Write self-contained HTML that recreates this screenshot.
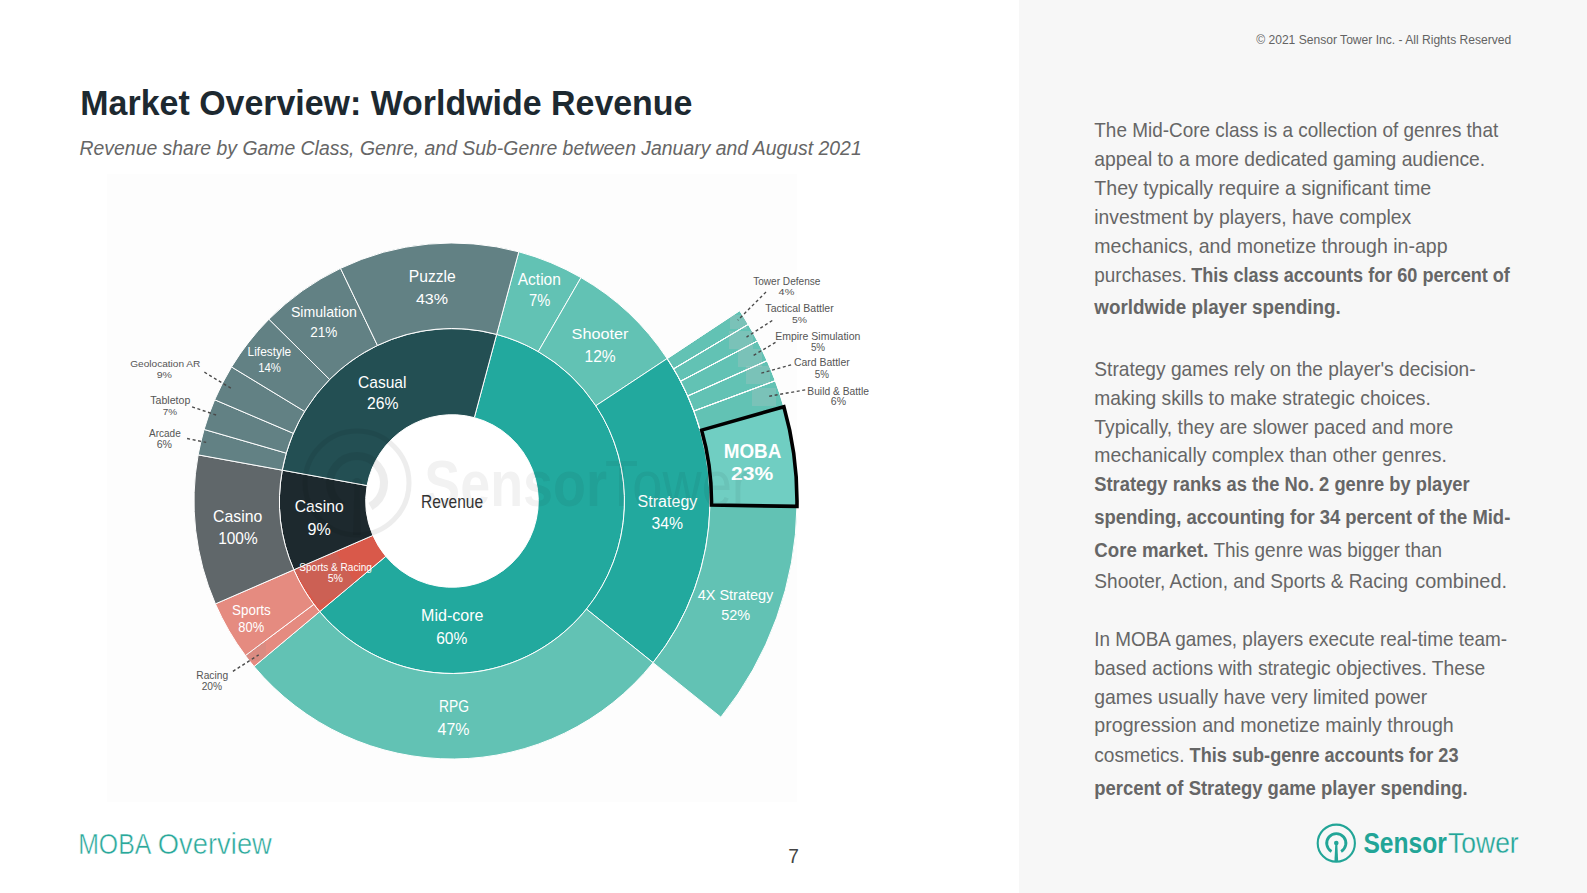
<!DOCTYPE html>
<html><head><meta charset="utf-8"><title>Market Overview: Worldwide Revenue</title>
<style>html,body{margin:0;padding:0;background:#fff;}body{width:1587px;height:893px;overflow:hidden;font-family:"Liberation Sans",sans-serif;}svg{display:block}</style>
</head><body>
<svg width="1587" height="893" viewBox="0 0 1587 893">
<rect x="0" y="0" width="1587" height="893" fill="#ffffff"/>
<rect x="107" y="174" width="690" height="628" fill="#fdfdfd"/>
<g stroke="#ffffff" stroke-width="1.0" stroke-linejoin="round">
<path d="M496.65,334.38 A172.5,172.5 0 1 1 319.66,611.65 L385.79,556.36 A86.3,86.3 0 1 0 474.34,417.64 Z" fill="#22a99e"/>
<path d="M319.66,611.65 A172.5,172.5 0 0 1 293.81,569.78 L372.86,535.41 A86.3,86.3 0 0 0 385.79,556.36 Z" fill="#d9594a"/>
<path d="M293.81,569.78 A172.5,172.5 0 0 1 282.28,470.16 L367.09,485.57 A86.3,86.3 0 0 0 372.86,535.41 Z" fill="#1d292e"/>
<path d="M282.28,470.16 A172.5,172.5 0 0 1 496.65,334.38 L474.34,417.64 A86.3,86.3 0 0 0 367.09,485.57 Z" fill="#234f53"/>
<path d="M518.78,251.79 A258.0,258.0 0 0 1 581.00,277.57 L538.25,351.61 A172.5,172.5 0 0 0 496.65,334.38 Z" fill="#62c2b4"/>
<path d="M581.00,277.57 A258.0,258.0 0 0 1 667.14,358.60 L595.85,405.79 A172.5,172.5 0 0 0 538.25,351.61 Z" fill="#62c2b4"/>
<path d="M667.14,358.60 A258.0,258.0 0 0 1 653.07,662.66 L586.44,609.09 A172.5,172.5 0 0 0 595.85,405.79 Z" fill="#22a99e"/>
<path d="M653.07,662.66 A258.0,258.0 0 0 1 254.07,666.49 L319.66,611.65 A172.5,172.5 0 0 0 586.44,609.09 Z" fill="#62c2b4"/>
<path d="M254.07,666.49 A258.0,258.0 0 0 1 245.41,655.55 L313.87,604.33 A172.5,172.5 0 0 0 319.66,611.65 Z" fill="#e58b80"/>
<path d="M245.41,655.55 A258.0,258.0 0 0 1 215.40,603.88 L293.81,569.78 A172.5,172.5 0 0 0 313.87,604.33 Z" fill="#e58b80"/>
<path d="M215.40,603.88 A258.0,258.0 0 0 1 198.16,454.87 L282.28,470.16 A172.5,172.5 0 0 0 293.81,569.78 Z" fill="#60676a"/>
<path d="M198.16,454.87 A258.0,258.0 0 0 1 204.12,429.45 L286.27,453.16 A172.5,172.5 0 0 0 282.28,470.16 Z" fill="#628184"/>
<path d="M204.12,429.45 A258.0,258.0 0 0 1 214.69,399.78 L293.33,433.32 A172.5,172.5 0 0 0 286.27,453.16 Z" fill="#628184"/>
<path d="M214.69,399.78 A258.0,258.0 0 0 1 231.55,366.96 L304.61,411.38 A172.5,172.5 0 0 0 293.33,433.32 Z" fill="#628184"/>
<path d="M231.55,366.96 A258.0,258.0 0 0 1 268.93,319.20 L329.60,379.45 A172.5,172.5 0 0 0 304.61,411.38 Z" fill="#628184"/>
<path d="M268.93,319.20 A258.0,258.0 0 0 1 340.52,268.33 L377.47,345.43 A172.5,172.5 0 0 0 329.60,379.45 Z" fill="#628184"/>
<path d="M340.52,268.33 A258.0,258.0 0 0 1 518.78,251.79 L496.65,334.38 A172.5,172.5 0 0 0 377.47,345.43 Z" fill="#628184"/>
<path d="M739.69,310.58 A345.0,345.0 0 0 1 748.34,324.35 L673.61,368.89 A258.0,258.0 0 0 0 667.14,358.60 Z" fill="#62c2b4"/>
<path d="M748.34,324.35 A345.0,345.0 0 0 1 757.60,340.90 L680.54,381.27 A258.0,258.0 0 0 0 673.61,368.89 Z" fill="#62c2b4"/>
<path d="M757.60,340.90 A345.0,345.0 0 0 1 767.17,360.68 L687.69,396.06 A258.0,258.0 0 0 0 680.54,381.27 Z" fill="#62c2b4"/>
<path d="M767.17,360.68 A345.0,345.0 0 0 1 775.36,380.74 L693.82,411.07 A258.0,258.0 0 0 0 687.69,396.06 Z" fill="#62c2b4"/>
<path d="M775.36,380.74 A345.0,345.0 0 0 1 783.80,406.48 L700.13,430.32 A258.0,258.0 0 0 0 693.82,411.07 Z" fill="#62c2b4"/>
<path d="M796.97,505.82 A345.0,345.0 0 0 1 720.87,717.18 L653.07,662.66 A258.0,258.0 0 0 0 709.97,504.60 Z" fill="#62c2b4"/>
</g>
<circle cx="452.0" cy="501.0" r="85.8" fill="#ffffff"/>
<clipPath id="srclip"><path d="M319.66,611.65 A172.5,172.5 0 0 1 293.81,569.78 L372.86,535.41 A86.3,86.3 0 0 0 385.79,556.36 Z"/></clipPath>
<polygon clip-path="url(#srclip)" points="336,552 356,584 318,606 294,570" fill="#8a8a8a" fill-opacity="0.16"/>
<clipPath id="rcclip"><path d="M254.07,666.49 A258.0,258.0 0 0 1 245.41,655.55 L313.87,604.33 A172.5,172.5 0 0 0 319.66,611.65 Z"/></clipPath>
<rect clip-path="url(#rcclip)" x="246" y="643" width="20" height="18" fill="#8a8a8a" fill-opacity="0.12"/>
<clipPath id="subclip"><path d="M739.69,310.58 A345.0,345.0 0 0 1 783.30,404.75 L699.76,429.02 A258.0,258.0 0 0 0 667.14,358.60 Z"/></clipPath>
<g fill="#c4c4c4" fill-opacity="0.25" clip-path="url(#subclip)">
<rect x="730" y="315" width="17" height="14"/>
<rect x="729" y="331" width="24" height="18"/>
<rect x="738" y="349" width="24" height="18"/>
<rect x="746" y="366" width="24" height="18"/>
<rect x="752" y="388" width="24" height="18"/>
</g>
<g stroke="#ffffff" stroke-width="1.0" fill="none">
<path d="M739.69,310.58 A345.0,345.0 0 0 1 748.34,324.35 L673.61,368.89 A258.0,258.0 0 0 0 667.14,358.60 Z"/>
<path d="M748.34,324.35 A345.0,345.0 0 0 1 757.60,340.90 L680.54,381.27 A258.0,258.0 0 0 0 673.61,368.89 Z"/>
<path d="M757.60,340.90 A345.0,345.0 0 0 1 767.17,360.68 L687.69,396.06 A258.0,258.0 0 0 0 680.54,381.27 Z"/>
<path d="M767.17,360.68 A345.0,345.0 0 0 1 775.36,380.74 L693.82,411.07 A258.0,258.0 0 0 0 687.69,396.06 Z"/>
<path d="M775.36,380.74 A345.0,345.0 0 0 1 783.80,406.48 L700.13,430.32 A258.0,258.0 0 0 0 693.82,411.07 Z"/>
</g>
<path d="M783.47,405.33 A345.0,345.0 0 0 1 796.97,505.82 L709.97,504.60 A258.0,258.0 0 0 0 699.88,429.45 Z" fill="#70cec2"/>
<path d="M783.88,406.77 A345.0,345.0 0 0 1 796.96,506.42 L711.47,505.08 A259.5,259.5 0 0 0 701.63,430.13 Z" fill="#70cec2" stroke="#000" stroke-width="3.6" stroke-linejoin="miter"/>
<text x="408.72" y="281.90" font-family="Liberation Sans" font-size="16.13" font-weight="normal" font-style="normal" fill="#fff" textLength="47.07" lengthAdjust="spacingAndGlyphs">Puzzle</text>
<text x="415.94" y="303.70" font-family="Liberation Sans" font-size="15.41" font-weight="normal" font-style="normal" fill="#fff" textLength="32.12" lengthAdjust="spacingAndGlyphs">43%</text>
<text x="290.95" y="317.20" font-family="Liberation Sans" font-size="14.97" font-weight="normal" font-style="normal" fill="#fff" textLength="65.90" lengthAdjust="spacingAndGlyphs">Simulation</text>
<text x="310.27" y="336.50" font-family="Liberation Sans" font-size="14.24" font-weight="normal" font-style="normal" fill="#fff" textLength="27.15" lengthAdjust="spacingAndGlyphs">21%</text>
<text x="247.61" y="355.90" font-family="Liberation Sans" font-size="13.08" font-weight="normal" font-style="normal" fill="#fff" textLength="43.58" lengthAdjust="spacingAndGlyphs">Lifestyle</text>
<text x="258.23" y="371.80" font-family="Liberation Sans" font-size="12.21" font-weight="normal" font-style="normal" fill="#fff" textLength="22.73" lengthAdjust="spacingAndGlyphs">14%</text>
<text x="357.99" y="387.60" font-family="Liberation Sans" font-size="17.01" font-weight="normal" font-style="normal" fill="#fff" textLength="48.52" lengthAdjust="spacingAndGlyphs">Casual</text>
<text x="367.02" y="409.40" font-family="Liberation Sans" font-size="16.13" font-weight="normal" font-style="normal" fill="#fff" textLength="31.47" lengthAdjust="spacingAndGlyphs">26%</text>
<text x="517.72" y="285.30" font-family="Liberation Sans" font-size="16.13" font-weight="normal" font-style="normal" fill="#fff" textLength="43.17" lengthAdjust="spacingAndGlyphs">Action</text>
<text x="529.12" y="306.20" font-family="Liberation Sans" font-size="16.13" font-weight="normal" font-style="normal" fill="#fff" textLength="21.27" lengthAdjust="spacingAndGlyphs">7%</text>
<text x="571.64" y="338.80" font-family="Liberation Sans" font-size="15.26" font-weight="normal" font-style="normal" fill="#fff" textLength="56.92" lengthAdjust="spacingAndGlyphs">Shooter</text>
<text x="584.52" y="361.60" font-family="Liberation Sans" font-size="16.13" font-weight="normal" font-style="normal" fill="#fff" textLength="31.17" lengthAdjust="spacingAndGlyphs">12%</text>
<text x="637.62" y="506.90" font-family="Liberation Sans" font-size="15.84" font-weight="normal" font-style="normal" fill="#fff" textLength="59.75" lengthAdjust="spacingAndGlyphs">Strategy</text>
<text x="651.41" y="529.00" font-family="Liberation Sans" font-size="16.28" font-weight="normal" font-style="normal" fill="#fff" textLength="31.58" lengthAdjust="spacingAndGlyphs">34%</text>
<text x="697.66" y="600.10" font-family="Liberation Sans" font-size="14.68" font-weight="normal" font-style="normal" fill="#fff" textLength="75.68" lengthAdjust="spacingAndGlyphs">4X Strategy</text>
<text x="721.16" y="620.30" font-family="Liberation Sans" font-size="14.68" font-weight="normal" font-style="normal" fill="#fff" textLength="28.98" lengthAdjust="spacingAndGlyphs">52%</text>
<text x="213.12" y="521.80" font-family="Liberation Sans" font-size="15.99" font-weight="normal" font-style="normal" fill="#fff" textLength="49.16" lengthAdjust="spacingAndGlyphs">Casino</text>
<text x="218.19" y="544.30" font-family="Liberation Sans" font-size="17.15" font-weight="normal" font-style="normal" fill="#fff" textLength="39.43" lengthAdjust="spacingAndGlyphs">100%</text>
<text x="294.79" y="512.10" font-family="Liberation Sans" font-size="17.01" font-weight="normal" font-style="normal" fill="#fff" textLength="48.82" lengthAdjust="spacingAndGlyphs">Casino</text>
<text x="307.59" y="534.80" font-family="Liberation Sans" font-size="17.01" font-weight="normal" font-style="normal" fill="#fff" textLength="23.22" lengthAdjust="spacingAndGlyphs">9%</text>
<text x="299.27" y="571.30" font-family="Liberation Sans" font-size="11.05" font-weight="normal" font-style="normal" fill="#fff" textLength="72.56" lengthAdjust="spacingAndGlyphs">Sports &amp; Racing</text>
<text x="327.69" y="582.10" font-family="Liberation Sans" font-size="10.17" font-weight="normal" font-style="normal" fill="#fff" textLength="15.31" lengthAdjust="spacingAndGlyphs">5%</text>
<text x="232.05" y="614.80" font-family="Liberation Sans" font-size="15.12" font-weight="normal" font-style="normal" fill="#fff" textLength="38.71" lengthAdjust="spacingAndGlyphs">Sports</text>
<text x="238.37" y="632.20" font-family="Liberation Sans" font-size="14.39" font-weight="normal" font-style="normal" fill="#fff" textLength="25.76" lengthAdjust="spacingAndGlyphs">80%</text>
<text x="421.13" y="620.80" font-family="Liberation Sans" font-size="15.70" font-weight="normal" font-style="normal" fill="#fff" textLength="62.34" lengthAdjust="spacingAndGlyphs">Mid-core</text>
<text x="436.23" y="643.50" font-family="Liberation Sans" font-size="15.70" font-weight="normal" font-style="normal" fill="#fff" textLength="31.14" lengthAdjust="spacingAndGlyphs">60%</text>
<text x="439.11" y="711.70" font-family="Liberation Sans" font-size="16.42" font-weight="normal" font-style="normal" fill="#fff" textLength="29.99" lengthAdjust="spacingAndGlyphs">RPG</text>
<text x="437.59" y="734.50" font-family="Liberation Sans" font-size="17.15" font-weight="normal" font-style="normal" fill="#fff" textLength="31.93" lengthAdjust="spacingAndGlyphs">47%</text>
<text x="723.72" y="457.50" font-family="Liberation Sans" font-size="19.48" font-weight="bold" font-style="normal" fill="#fff" textLength="57.57" lengthAdjust="spacingAndGlyphs">MOBA</text>
<text x="731.14" y="479.70" font-family="Liberation Sans" font-size="18.60" font-weight="bold" font-style="normal" fill="#fff" textLength="42.12" lengthAdjust="spacingAndGlyphs">23%</text>
<text x="421.06" y="508.00" font-family="Liberation Sans" font-size="17.88" font-weight="normal" font-style="normal" fill="#333" textLength="62.07" lengthAdjust="spacingAndGlyphs">Revenue</text>
<text x="130.21" y="366.60" font-family="Liberation Sans" font-size="9.74" font-weight="normal" font-style="normal" fill="#555" textLength="70.18" lengthAdjust="spacingAndGlyphs">Geolocation AR</text>
<text x="156.71" y="377.70" font-family="Liberation Sans" font-size="9.74" font-weight="normal" font-style="normal" fill="#555" textLength="15.28" lengthAdjust="spacingAndGlyphs">9%</text>
<text x="150.29" y="403.80" font-family="Liberation Sans" font-size="10.47" font-weight="normal" font-style="normal" fill="#555" textLength="40.03" lengthAdjust="spacingAndGlyphs">Tabletop</text>
<text x="162.80" y="414.70" font-family="Liberation Sans" font-size="9.88" font-weight="normal" font-style="normal" fill="#555" textLength="14.39" lengthAdjust="spacingAndGlyphs">7%</text>
<text x="148.99" y="436.90" font-family="Liberation Sans" font-size="10.32" font-weight="normal" font-style="normal" fill="#555" textLength="31.72" lengthAdjust="spacingAndGlyphs">Arcade</text>
<text x="156.69" y="447.70" font-family="Liberation Sans" font-size="10.47" font-weight="normal" font-style="normal" fill="#555" textLength="15.33" lengthAdjust="spacingAndGlyphs">6%</text>
<text x="196.29" y="678.80" font-family="Liberation Sans" font-size="10.32" font-weight="normal" font-style="normal" fill="#555" textLength="31.82" lengthAdjust="spacingAndGlyphs">Racing</text>
<text x="201.69" y="689.80" font-family="Liberation Sans" font-size="10.47" font-weight="normal" font-style="normal" fill="#555" textLength="20.43" lengthAdjust="spacingAndGlyphs">20%</text>
<text x="753.19" y="284.90" font-family="Liberation Sans" font-size="10.32" font-weight="normal" font-style="normal" fill="#555" textLength="67.22" lengthAdjust="spacingAndGlyphs">Tower Defense</text>
<text x="778.61" y="295.40" font-family="Liberation Sans" font-size="9.59" font-weight="normal" font-style="normal" fill="#555" textLength="15.68" lengthAdjust="spacingAndGlyphs">4%</text>
<text x="765.39" y="312.00" font-family="Liberation Sans" font-size="10.47" font-weight="normal" font-style="normal" fill="#555" textLength="68.33" lengthAdjust="spacingAndGlyphs">Tactical Battler</text>
<text x="792.11" y="322.50" font-family="Liberation Sans" font-size="9.74" font-weight="normal" font-style="normal" fill="#555" textLength="14.98" lengthAdjust="spacingAndGlyphs">5%</text>
<text x="775.19" y="339.70" font-family="Liberation Sans" font-size="10.17" font-weight="normal" font-style="normal" fill="#555" textLength="85.21" lengthAdjust="spacingAndGlyphs">Empire Simulation</text>
<text x="810.89" y="350.70" font-family="Liberation Sans" font-size="10.17" font-weight="normal" font-style="normal" fill="#555" textLength="14.21" lengthAdjust="spacingAndGlyphs">5%</text>
<text x="793.99" y="366.40" font-family="Liberation Sans" font-size="10.32" font-weight="normal" font-style="normal" fill="#555" textLength="55.72" lengthAdjust="spacingAndGlyphs">Card Battler</text>
<text x="814.79" y="377.80" font-family="Liberation Sans" font-size="10.17" font-weight="normal" font-style="normal" fill="#555" textLength="14.21" lengthAdjust="spacingAndGlyphs">5%</text>
<text x="807.29" y="394.60" font-family="Liberation Sans" font-size="10.17" font-weight="normal" font-style="normal" fill="#555" textLength="61.71" lengthAdjust="spacingAndGlyphs">Build &amp; Battle</text>
<text x="830.80" y="405.10" font-family="Liberation Sans" font-size="10.03" font-weight="normal" font-style="normal" fill="#555" textLength="15.20" lengthAdjust="spacingAndGlyphs">6%</text>
<line x1="204.4" y1="372.2" x2="230.9" y2="388.2" stroke="#4a4a4a" stroke-width="1.4" stroke-dasharray="3,2.6"/>
<line x1="192.1" y1="406.9" x2="216.1" y2="415.0" stroke="#4a4a4a" stroke-width="1.4" stroke-dasharray="3,2.6"/>
<line x1="187.1" y1="438.5" x2="206.2" y2="442.4" stroke="#4a4a4a" stroke-width="1.4" stroke-dasharray="3,2.6"/>
<line x1="232.9" y1="671.3" x2="258.7" y2="654.9" stroke="#4a4a4a" stroke-width="1.4" stroke-dasharray="3,2.6"/>
<line x1="766.0" y1="292.0" x2="737.8" y2="320.2" stroke="#4a4a4a" stroke-width="1.4" stroke-dasharray="3,2.6"/>
<line x1="772.3" y1="320.5" x2="746.5" y2="337.1" stroke="#4a4a4a" stroke-width="1.4" stroke-dasharray="3,2.6"/>
<line x1="775.5" y1="342.4" x2="753.5" y2="355.4" stroke="#4a4a4a" stroke-width="1.4" stroke-dasharray="3,2.6"/>
<line x1="791.1" y1="364.8" x2="761.3" y2="373.1" stroke="#4a4a4a" stroke-width="1.4" stroke-dasharray="3,2.6"/>
<line x1="805.2" y1="389.9" x2="769.2" y2="396.2" stroke="#4a4a4a" stroke-width="1.4" stroke-dasharray="3,2.6"/>
<g opacity="0.065" fill="none" stroke="#000">
<circle cx="357" cy="483" r="52" stroke-width="5"/>
<path d="M343.5,506.5 A27,27 0 1 1 370.5,506.5" stroke-width="8"/>
</g>
<g opacity="0.065" fill="#000"><circle cx="357" cy="483" r="5"/><path d="M354.5,483 L359.5,483 L361,535 L353,535 Z"/></g>
<text fill-opacity="0.055" x="424.26" y="506.00" font-family="Liberation Sans" font-size="64.68" font-weight="bold" font-style="normal" fill="#111" textLength="182.68" lengthAdjust="spacingAndGlyphs">Sensor</text>
<text fill-opacity="0.055" x="605.06" y="506.00" font-family="Liberation Sans" font-size="64.68" font-weight="normal" font-style="normal" fill="#111" textLength="144.88" lengthAdjust="spacingAndGlyphs">Tower</text>
<text x="80.35" y="115.40" font-family="Liberation Sans" font-size="34.88" font-weight="bold" font-style="normal" fill="#1d2930" textLength="612.09" lengthAdjust="spacingAndGlyphs">Market Overview: Worldwide Revenue</text>
<text x="79.59" y="155.00" font-family="Liberation Sans" font-size="20.35" font-weight="normal" font-style="italic" fill="#666" textLength="782.12" lengthAdjust="spacingAndGlyphs">Revenue share by Game Class, Genre, and Sub-Genre between January and August 2021</text>
<text stroke="#ffffff" stroke-width="0.5" x="78.13" y="854.00" font-family="Liberation Sans" font-size="29.07" font-weight="normal" font-style="normal" fill="#2aa89a" textLength="73.14" lengthAdjust="spacingAndGlyphs">MOBA</text>
<text stroke="#ffffff" stroke-width="0.5" x="157.83" y="854.00" font-family="Liberation Sans" font-size="29.07" font-weight="normal" font-style="normal" fill="#2aa89a" textLength="114.04" lengthAdjust="spacingAndGlyphs">Overview</text>
<text x="788.19" y="862.80" font-family="Liberation Sans" font-size="20.20" font-weight="normal" font-style="normal" fill="#444" textLength="10.61" lengthAdjust="spacingAndGlyphs">7</text>
<rect x="1019" y="0" width="568" height="893" fill="#f7f7f7"/>
<text x="1256.21" y="44.40" font-family="Liberation Sans" font-size="13.08" font-weight="normal" font-style="normal" fill="#636363" textLength="255.08" lengthAdjust="spacingAndGlyphs">© 2021 Sensor Tower Inc. - All Rights Reserved</text>
<text x="1094.32" y="137.00" font-family="Liberation Sans" font-size="19.48" font-weight="normal" font-style="normal" fill="#666" textLength="403.87" lengthAdjust="spacingAndGlyphs">The Mid-Core class is a collection of genres that</text>
<text x="1094.32" y="166.00" font-family="Liberation Sans" font-size="19.48" font-weight="normal" font-style="normal" fill="#666" textLength="390.87" lengthAdjust="spacingAndGlyphs">appeal to a more dedicated gaming audience.</text>
<text x="1094.32" y="194.50" font-family="Liberation Sans" font-size="19.48" font-weight="normal" font-style="normal" fill="#666" textLength="336.87" lengthAdjust="spacingAndGlyphs">They typically require a significant time</text>
<text x="1094.32" y="223.50" font-family="Liberation Sans" font-size="19.48" font-weight="normal" font-style="normal" fill="#666" textLength="316.87" lengthAdjust="spacingAndGlyphs">investment by players, have complex</text>
<text x="1094.32" y="252.50" font-family="Liberation Sans" font-size="19.48" font-weight="normal" font-style="normal" fill="#666" textLength="353.27" lengthAdjust="spacingAndGlyphs">mechanics, and monetize through in-app</text>
<text x="1094.32" y="281.50" font-family="Liberation Sans" font-size="19.48" font-weight="normal" font-style="normal" fill="#666" textLength="92.47" lengthAdjust="spacingAndGlyphs">purchases.</text>
<text x="1191.22" y="281.50" font-family="Liberation Sans" font-size="19.48" font-weight="bold" font-style="normal" fill="#666" textLength="318.67" lengthAdjust="spacingAndGlyphs">This class accounts for 60 percent of</text>
<text x="1094.32" y="314.40" font-family="Liberation Sans" font-size="19.48" font-weight="bold" font-style="normal" fill="#666" textLength="246.47" lengthAdjust="spacingAndGlyphs">worldwide player spending.</text>
<text x="1094.32" y="375.50" font-family="Liberation Sans" font-size="19.48" font-weight="normal" font-style="normal" fill="#666" textLength="381.27" lengthAdjust="spacingAndGlyphs">Strategy games rely on the player&#x27;s decision-</text>
<text x="1094.32" y="404.50" font-family="Liberation Sans" font-size="19.48" font-weight="normal" font-style="normal" fill="#666" textLength="336.47" lengthAdjust="spacingAndGlyphs">making skills to make strategic choices.</text>
<text x="1094.32" y="433.50" font-family="Liberation Sans" font-size="19.48" font-weight="normal" font-style="normal" fill="#666" textLength="358.87" lengthAdjust="spacingAndGlyphs">Typically, they are slower paced and more</text>
<text x="1094.32" y="462.00" font-family="Liberation Sans" font-size="19.48" font-weight="normal" font-style="normal" fill="#666" textLength="352.47" lengthAdjust="spacingAndGlyphs">mechanically complex than other genres.</text>
<text x="1094.32" y="491.00" font-family="Liberation Sans" font-size="19.48" font-weight="bold" font-style="normal" fill="#666" textLength="375.37" lengthAdjust="spacingAndGlyphs">Strategy ranks as the No. 2 genre by player</text>
<text x="1094.32" y="524.00" font-family="Liberation Sans" font-size="19.48" font-weight="bold" font-style="normal" fill="#666" textLength="415.97" lengthAdjust="spacingAndGlyphs">spending, accounting for 34 percent of the Mid-</text>
<text x="1094.32" y="556.80" font-family="Liberation Sans" font-size="19.48" font-weight="bold" font-style="normal" fill="#666" textLength="114.07" lengthAdjust="spacingAndGlyphs">Core market.</text>
<text x="1213.52" y="556.80" font-family="Liberation Sans" font-size="19.48" font-weight="normal" font-style="normal" fill="#666" textLength="228.47" lengthAdjust="spacingAndGlyphs">This genre was bigger than</text>
<text x="1094.32" y="588.00" font-family="Liberation Sans" font-size="19.48" font-weight="normal" font-style="normal" fill="#666" textLength="313.87" lengthAdjust="spacingAndGlyphs">Shooter, Action, and Sports &amp; Racing</text>
<text x="1415.32" y="588.00" font-family="Liberation Sans" font-size="19.48" font-weight="normal" font-style="normal" fill="#666" textLength="91.67" lengthAdjust="spacingAndGlyphs">combined.</text>
<text x="1094.32" y="645.70" font-family="Liberation Sans" font-size="19.48" font-weight="normal" font-style="normal" fill="#666" textLength="412.67" lengthAdjust="spacingAndGlyphs">In MOBA games, players execute real-time team-</text>
<text x="1094.32" y="675.00" font-family="Liberation Sans" font-size="19.48" font-weight="normal" font-style="normal" fill="#666" textLength="390.97" lengthAdjust="spacingAndGlyphs">based actions with strategic objectives. These</text>
<text x="1094.32" y="703.60" font-family="Liberation Sans" font-size="19.48" font-weight="normal" font-style="normal" fill="#666" textLength="332.87" lengthAdjust="spacingAndGlyphs">games usually have very limited power</text>
<text x="1094.32" y="732.20" font-family="Liberation Sans" font-size="19.48" font-weight="normal" font-style="normal" fill="#666" textLength="359.47" lengthAdjust="spacingAndGlyphs">progression and monetize mainly through</text>
<text x="1094.32" y="761.80" font-family="Liberation Sans" font-size="19.48" font-weight="normal" font-style="normal" fill="#666" textLength="90.17" lengthAdjust="spacingAndGlyphs">cosmetics.</text>
<text x="1189.62" y="761.80" font-family="Liberation Sans" font-size="19.48" font-weight="bold" font-style="normal" fill="#666" textLength="268.87" lengthAdjust="spacingAndGlyphs">This sub-genre accounts for 23</text>
<text x="1094.32" y="794.50" font-family="Liberation Sans" font-size="19.48" font-weight="bold" font-style="normal" fill="#666" textLength="373.27" lengthAdjust="spacingAndGlyphs">percent of Strategy game player spending.</text>
<g fill="none" stroke="#22a597"><circle cx="1336.3" cy="843.2" r="18.6" stroke-width="2.1"/><path d="M1331.5,851.5 A9.6,9.6 0 1 1 1341.1,851.5" stroke-width="2.8"/></g><circle cx="1336.3" cy="843.0" r="2.3" fill="#22a597"/><path d="M1335.3,843.5 L1337.3,843.5 L1338.2,862 L1334.4,862 Z" fill="#22a597"/>
<text x="1363.41" y="853.10" font-family="Liberation Sans" font-size="29.65" font-weight="bold" font-style="normal" fill="#22a597" textLength="83.38" lengthAdjust="spacingAndGlyphs">Sensor</text>
<text stroke="#f7f7f7" stroke-width="0.3" x="1448.11" y="853.10" font-family="Liberation Sans" font-size="29.65" font-weight="normal" font-style="normal" fill="#22a597" textLength="70.58" lengthAdjust="spacingAndGlyphs">Tower</text>
</svg>
</body></html>
